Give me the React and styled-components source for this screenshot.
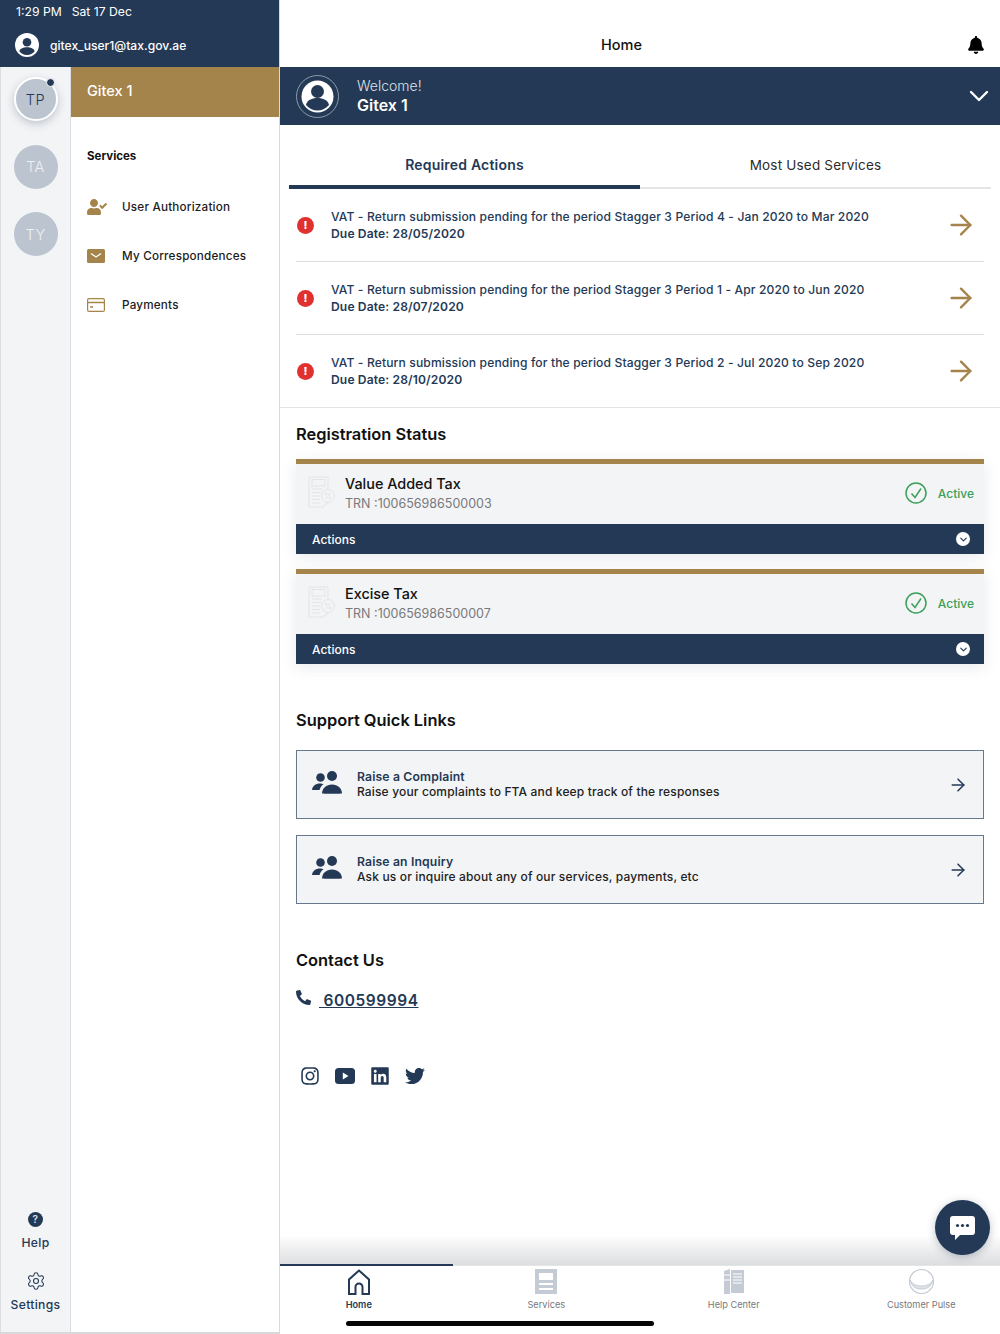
import React from "react";
import styled, { createGlobalStyle } from "styled-components";
import { FaBell, FaInstagram, FaLinkedin, FaTwitter, FaPhoneAlt, FaUserCheck } from "react-icons/fa";
import { Settings, ArrowRight, ChevronDown } from "lucide-react";

const NAVY = "#243955";
const GOLD = "#a5844b";
const PALE = "#f3f4f6";

const Global = createGlobalStyle`
  html, body { margin: 0; padding: 0; background: #fff; }
  body { font-family: Inter, "Liberation Sans", sans-serif; }
  * { box-sizing: border-box; }
`;

const Page = styled.div`
  position: relative;
  width: 1000px;
  height: 1334px;
  display: flex;
  overflow: hidden;
`;

/* ---- 왼쪽 ---- */
const Side = styled.aside`
  width: 280px;
  display: flex;
  flex-direction: column;
  border-right: 1px solid #d8d9db;
  border-bottom: 2px solid #d8d9db;
`;
const SideTop = styled.div`
  height: 67px;
  background: ${NAVY};
  color: #fff;
  padding: 5px 0 0 16px;
`;
const Clock = styled.div`
  font-size: 12.2px;
  line-height: 14px;
  span { margin-left: 10px; }
`;
const UserRow = styled.div`
  display: flex;
  align-items: center;
  gap: 11px;
  margin: 14px 0 0 -1px;
  font-size: 12.1px;
  font-weight: 500;
`;
const SideBody = styled.div`
  flex: 1;
  display: flex;
`;
const Rail = styled.div`
  width: 71px;
  background: ${PALE};
  border-left: 1px solid #dcdde0;
  border-right: 1px solid #dcdde0;
  display: flex;
  flex-direction: column;
  align-items: center;
  padding-top: 10px;
`;
const Avatar = styled.div`
  position: relative;
  width: 44px;
  height: 44px;
  border-radius: 50%;
  background: #bcc4d0;
  color: ${(p) => (p.$active ? NAVY : "#eef0f3")};
  display: flex;
  align-items: center;
  justify-content: center;
  font-size: 14.5px;
  font-weight: 300;
  letter-spacing: 0.5px;
  margin-bottom: 23.5px;
  ${(p) => p.$active && `border: 2px solid #fff; box-shadow: 0 3px 9px rgba(36,57,85,.25);`}
`;
const Dot = styled.i`
  position: absolute;
  top: -1px;
  right: 1px;
  width: 9px;
  height: 9px;
  border-radius: 50%;
  background: ${NAVY};
  border: 1.5px solid #fff;
`;
const RailBottom = styled.div`
  margin-top: auto;
  display: flex;
  flex-direction: column;
  align-items: center;
  padding-bottom: 20px;
`;
const RailItem = styled.div`
  display: flex;
  flex-direction: column;
  align-items: center;
  gap: ${(p) => p.$gap}px;
  color: ${NAVY};
  font-size: 12.2px;
  font-weight: 500;
  letter-spacing: 0.3px;
  margin-top: ${(p) => p.$mt || 0}px;
`;
const HelpDot = styled.div`
  width: 15px;
  height: 15px;
  border-radius: 50%;
  background: ${NAVY};
  color: #dfe3e9;
  font-size: 10px;
  font-weight: 600;
  line-height: 15px;
  text-align: center;
`;
const Panel = styled.div`
  flex: 1;
  background: #fff;
`;
const PanelHead = styled.div`
  height: 50px;
  background: ${GOLD};
  color: #fff;
  font-size: 14.5px;
  font-weight: 500;
  padding: 0 16px 3px;
  display: flex;
  align-items: center;
`;
const PanelTitle = styled.div`
  font-size: 11.5px;
  font-weight: 700;
  color: #111;
  margin: 32px 0 19px 16px;
  line-height: 14px;
`;
const MenuRow = styled.div`
  display: flex;
  align-items: center;
  height: 49px;
  padding-left: 16px;
  font-size: 11.7px;
  font-weight: 500;
  color: #1c1c1c;
  letter-spacing: 0.2px;
`;
const MenuIcon = styled.div`
  width: 35px;
  color: ${GOLD};
  display: flex;
`;

/* ---- 오른쪽 ---- */
const Main = styled.main`
  flex: 1;
  display: flex;
  flex-direction: column;
  min-width: 0;
`;
const TopBar = styled.header`
  position: relative;
  height: 67px;
  display: flex;
  align-items: flex-end;
  justify-content: center;
  padding: 0 37px 14px 0;
  font-size: 14.5px;
  font-weight: 500;
  color: #111;
`;
const BellWrap = styled.div`
  position: absolute;
  right: 15px;
  bottom: 13px;
  display: flex;
`;
const Welcome = styled.div`
  height: 58px;
  background: ${NAVY};
  display: flex;
  align-items: center;
  padding: 0 5px 0 16px;
  color: #fff;
  gap: 18px;
`;
const WelcomeText = styled.div`
  flex: 1;
  small { display: block; font-size: 14px; line-height: 19px; color: #dfe3e9; font-weight: 300; }
  b { display: block; font-size: 16px; line-height: 21px; font-weight: 600; }
`;
const Tabs = styled.div`
  display: flex;
  height: 64px;
  padding: 0 9px;
`;
const Tab = styled.div`
  flex: 1;
  display: flex;
  align-items: center;
  justify-content: center;
  font-size: ${(p) => (p.$active ? 14 : 13.5)}px;
  color: ${(p) => (p.$active ? NAVY : "#2b2b2b")};
  font-weight: ${(p) => (p.$active ? 600 : 400)};
  letter-spacing: 0.2px;
  border-bottom: ${(p) => (p.$active ? `4px solid ${NAVY}` : "2px solid #e4e5e7")};
  padding-top: 18px;
`;
const ActionList = styled.div`
  border-bottom: 1px solid #e2e3e5;
  padding: 0 16px;
`;
const ActionRow = styled.div`
  height: ${(p) => (p.$last ? 72 : 73)}px;
  display: flex;
  align-items: center;
  border-bottom: ${(p) => (p.$last ? "none" : "1px solid #dcdde0")};
`;
const AlertDot = styled.div`
  width: 17px;
  height: 17px;
  border-radius: 50%;
  background: #e03030;
  color: #fff;
  font-size: 11px;
  font-weight: 800;
  line-height: 17px;
  text-align: center;
  margin: 0 17px 0 1px;
`;
const ActionText = styled.div`
  flex: 1;
  color: ${NAVY};
  font-size: 12.1px;
  letter-spacing: 0.125px;
  line-height: 17px;
  font-weight: 500;
  b { display: block; font-weight: 600; }
`;
const ArrowBox = styled.div`
  display: flex;
  color: ${GOLD};
  margin-right: 7px;
`;
const Section = styled.section`
  padding: 0 16px;
`;
const Heading = styled.h2`
  margin: ${(p) => p.$mt}px 0 ${(p) => p.$mb}px;
  font-size: 16.4px;
  line-height: 20px;
  font-weight: 600;
  color: #111;
`;
const RegCard = styled.div`
  border-top: 5px solid ${GOLD};
  margin-bottom: 15px;
  box-shadow: 0 4px 14px rgba(36,57,85,.1);
`;
const RegBody = styled.div`
  height: 60px;
  background: ${PALE};
  display: flex;
  align-items: center;
  padding: 0 10px 0 12px;
  position: relative;
  svg.vat { margin-top: -3px; }
`;
const RegInfo = styled.div`
  flex: 1;
  margin-left: 10px;
  margin-top: -1px;
  h3 { margin: 0; font-size: 14.4px; line-height: 20px; font-weight: 500; color: #111; }
  p { margin: 0; font-size: 12.5px; line-height: 19px; color: #77797c; }
`;
const ActiveTag = styled.div`
  display: flex;
  align-items: center;
  gap: 11px;
  color: #3ba05a;
  font-size: 12px;
  font-weight: 500;
  margin-top: -2px;
`;
const RegActions = styled.div`
  height: 30px;
  background: ${NAVY};
  color: #fff;
  font-size: 12px;
  font-weight: 500;
  display: flex;
  align-items: center;
  justify-content: space-between;
  padding: 0 14px 0 16px;
`;
const RoundChevron = styled.div`
  width: 14px;
  height: 14px;
  border-radius: 50%;
  background: #fff;
  color: ${NAVY};
  display: flex;
  align-items: center;
  justify-content: center;
`;
const LinkCard = styled.div`
  height: 69px;
  margin-bottom: 16px;
  background: ${PALE};
  border: 1.5px solid #67778c;
  display: flex;
  align-items: center;
  padding: 0 15px;
  svg.people { margin-top: -4px; }
`;
const LinkText = styled.div`
  flex: 1;
  margin-left: 15px;
  margin-top: -1px;
  font-size: 12px;
  letter-spacing: 0.15px;
  line-height: 15px;
  font-weight: 500;
  color: #222;
  b { display: block; color: ${NAVY}; font-weight: 600; font-size: 12.2px; }
`;
const Phone = styled.div`
  display: flex;
  align-items: center;
  color: ${NAVY};
  gap: 8px;
  margin-top: 19px;
  height: 22px;
  a { color: ${NAVY}; font-size: 15.5px; font-weight: 600; text-decoration: underline; white-space: pre; letter-spacing: 0.55px; }
  svg { margin-top: -6px; }
`;
const Socials = styled.div`
  display: flex;
  align-items: center;
  gap: 15px;
  color: ${NAVY};
  margin: 55px 0 0 4px;
`;
const Spacer = styled.div`
  flex: 1;
  position: relative;
  &::after {
    content: "";
    position: absolute;
    left: 0; right: 0; bottom: 0;
    height: 30px;
    background: linear-gradient(to bottom, rgba(220,221,223,0), rgba(220,221,223,1));
  }
`;
const BottomNav = styled.nav`
  height: 69px;
  border-top: 1px solid #e4e5e7;
  background: #fff;
`;
/* 탭 간격이 화면보다 넓음 - 좌우로 15px씩 삐져나감 */
const NavRow = styled.div`
  display: flex;
  margin: 0 -15px;
`;
const NavItem = styled.div`
  flex: 1;
  position: relative;
  display: flex;
  flex-direction: column;
  align-items: center;
  padding-top: 3px;
  font-size: 9.2px;
  color: ${(p) => (p.$active ? NAVY : "#77797c")};
  font-weight: ${(p) => (p.$active ? 600 : 400)};
  ${(p) => p.$active && `&::before { content: ""; position: absolute; top: -2px; left: 15px; right: 0; height: 2px; background: ${NAVY}; }`}
`;
const NavIcon = styled.div`
  height: 27px;
  margin-bottom: 3px;
  display: flex;
`;
const Fab = styled.div`
  position: absolute;
  right: 10px;
  top: 1200px;
  width: 55px;
  height: 55px;
  border-radius: 50%;
  background: ${NAVY};
  display: flex;
  align-items: center;
  justify-content: center;
  box-shadow: 0 2px 8px rgba(36,57,85,.3);
`;
const HomeBar = styled.div`
  position: absolute;
  left: 346px;
  top: 1321px;
  width: 308px;
  height: 5px;
  border-radius: 3px;
  background: #050505;
`;

const ProfileGlyph = ({ size, fg, bg }) => (
  <svg width={size} height={size} viewBox="0 0 24 24">
    <circle cx="12" cy="12" r="12" fill={bg} />
    <circle cx="12" cy="9.2" r="4.3" fill={fg} />
    <path d="M4.3 18.2c1-3 4-4 7.7-4s6.700 1 7.700 4c-1.800 2.300-4.500 3.800-7.700 3.800s-5.900-1.500-7.700-3.800z" fill={fg} />
  </svg>
);

const VatIcon = () => (
  <svg className="vat" width="27" height="33" viewBox="0 0 27 33" fill="none" stroke="#e3e4e7" strokeWidth="1">
    <path d="M1 1h19v12M1 1v30h14l5-4" />
    <rect x="4" y="3.500" width="13" height="6.500" />
    <path d="M4 13h10M4 16.500h9M4 20h8M4 23.500h8M4 27h8" />
    <circle cx="20" cy="20" r="6.500" />
    <path d="M17.500 23l5-6" />
    <circle cx="18" cy="18" r="1" />
    <circle cx="22" cy="22" r="1" />
  </svg>
);

const PeopleIcon = () => (
  <svg className="people" width="30" height="23" viewBox="0 0 30 23" fill={NAVY}>
    <circle cx="8.500" cy="6.500" r="4.300" />
    <circle cx="20" cy="5" r="5" />
    <path d="M0 19c.5-4 3.500-6.500 8-6.500 1.500 0 2.500.3 3.500.8-2 1.300-3.300 3.200-4 5.700z" />
    <path d="M10 22.500c.3-5.500 4.300-9 10-9s9.700 3.500 10 9c-2 .3-18 .3-20 0z" />
  </svg>
);

const ActiveCheck = () => (
  <svg width="22" height="22" viewBox="0 0 22 22" fill="none" stroke="#3ba05a" strokeWidth="1.500">
    <circle cx="11" cy="11" r="10" />
    <path d="M6.500 11.500l3.500 4 6-9" />
  </svg>
);

const YoutubeGlyph = () => (
  <svg width="20" height="16" viewBox="0 0 20 16">
    <rect width="20" height="16" rx="3.500" fill={NAVY} />
    <path d="M7.800 4.500l5.700 3.500-5.700 3.500z" fill="#fff" />
  </svg>
);

const actions = [
  { text: "VAT - Return submission pending for the period Stagger 3 Period 4 - Jan 2020 to Mar 2020", due: "Due Date: 28/05/2020" },
  { text: "VAT - Return submission pending for the period Stagger 3 Period 1 - Apr 2020 to Jun 2020", due: "Due Date: 28/07/2020" },
  { text: "VAT - Return submission pending for the period Stagger 3 Period 2 - Jul 2020 to Sep 2020", due: "Due Date: 28/10/2020" },
];

const regs = [
  { name: "Value Added Tax", trn: "TRN :100656986500003" },
  { name: "Excise Tax", trn: "TRN :100656986500007" },
];

const links = [
  { title: "Raise a Complaint", desc: "Raise your complaints to FTA and keep track of the responses" },
  { title: "Raise an Inquiry", desc: "Ask us or inquire about any of our services, payments, etc" },
];

export default function App() {
  return (
    <Page>
      <Global />
      <Side>
        <SideTop>
          <Clock>1:29 PM<span>Sat 17 Dec</span></Clock>
          <UserRow>
            <ProfileGlyph size={24} fg={NAVY} bg="#fff" />
            gitex_user1@tax.gov.ae
          </UserRow>
        </SideTop>
        <SideBody>
          <Rail>
            <Avatar $active>TP<Dot /></Avatar>
            <Avatar>TA</Avatar>
            <Avatar>TY</Avatar>
            <RailBottom>
              <RailItem $gap={8}>
                <HelpDot>?</HelpDot>
                Help
              </RailItem>
              <RailItem $gap={6} $mt={21}>
                <Settings size={20} strokeWidth={1.3} />
                Settings
              </RailItem>
            </RailBottom>
          </Rail>
          <Panel>
            <PanelHead>Gitex 1</PanelHead>
            <PanelTitle>Services</PanelTitle>
            <MenuRow>
              <MenuIcon><FaUserCheck size={20} /></MenuIcon>
              User Authorization
            </MenuRow>
            <MenuRow>
              <MenuIcon>
                <svg width="18" height="14" viewBox="0 0 18 14">
                  <rect width="18" height="14" rx="1.500" fill={GOLD} />
                  <path d="M4 4.500l5 3.500 5-3.500" fill="none" stroke="#fff" strokeWidth="1.200" />
                </svg>
              </MenuIcon>
              My Correspondences
            </MenuRow>
            <MenuRow>
              <MenuIcon>
                <svg width="18" height="14" viewBox="0 0 18 14" fill="none" stroke={GOLD} strokeWidth="1.200">
                  <rect x=".6" y=".6" width="16.800" height="12.800" rx="1.500" />
                  <path d="M.6 4.500h16.800" strokeWidth="1.500" />
                  <path d="M3 9h3" strokeWidth="1.500" />
                </svg>
              </MenuIcon>
              Payments
            </MenuRow>
          </Panel>
        </SideBody>
      </Side>

      <Main>
        <TopBar>
          Home
          <BellWrap><FaBell size={18} color="#000" /></BellWrap>
        </TopBar>
        <Welcome>
          <svg width="43" height="43" viewBox="0 0 43 43">
            <circle cx="21.500" cy="21.500" r="21" fill="none" stroke="#a9b2bf" strokeWidth=".8" />
            <circle cx="21.500" cy="21.500" r="16" fill="#fff" />
            <circle cx="21.500" cy="16.500" r="6.500" fill={NAVY} />
            <path d="M10 30c1-5 6-7 11.500-7s10.500 2 11.500 7c-2.800 3.500-7 5.500-11.500 5.500S12.800 33.500 10 30z" fill={NAVY} />
          </svg>
          <WelcomeText>
            <small>Welcome!</small>
            <b>Gitex 1</b>
          </WelcomeText>
          <ChevronDown size={32} strokeWidth={1.8} />
        </Welcome>
        <Tabs>
          <Tab $active>Required Actions</Tab>
          <Tab>Most Used Services</Tab>
        </Tabs>
        <ActionList>
          {actions.map((a, i) => (
            <ActionRow key={a.due} $last={i === actions.length - 1}>
              <AlertDot>!</AlertDot>
              <ActionText>
                {a.text}
                <b>{a.due}</b>
              </ActionText>
              <ArrowBox><ArrowRight size={32} strokeWidth={1.8} /></ArrowBox>
            </ActionRow>
          ))}
        </ActionList>
        <Section>
          <Heading $mt={16} $mb={15}>Registration Status</Heading>
          {regs.map((r) => (
            <RegCard key={r.name}>
              <RegBody>
                <VatIcon />
                <RegInfo>
                  <h3>{r.name}</h3>
                  <p>{r.trn}</p>
                </RegInfo>
                <ActiveTag><ActiveCheck />Active</ActiveTag>
              </RegBody>
              <RegActions>
                Actions
                <RoundChevron><ChevronDown size={11} strokeWidth={2.5} /></RoundChevron>
              </RegActions>
            </RegCard>
          ))}
          <Heading $mt={46} $mb={20}>Support Quick Links</Heading>
          {links.map((l) => (
            <LinkCard key={l.title}>
              <PeopleIcon />
              <LinkText>
                <b>{l.title}</b>
                {l.desc}
              </LinkText>
              <ArrowRight size={20} color={NAVY} strokeWidth={1.8} />
            </LinkCard>
          ))}
          <Heading $mt={46} $mb={0}>Contact Us</Heading>
          <Phone>
            <FaPhoneAlt size={15} />
            <a> 600599994</a>
          </Phone>
          <Socials>
            <FaInstagram size={20} />
            <YoutubeGlyph />
            <FaLinkedin size={20} />
            <FaTwitter size={20} />
          </Socials>
        </Section>
        <Spacer />
        <BottomNav>
          <NavRow>
            <NavItem $active>
              <NavIcon>
                <svg width="24" height="27" viewBox="0 0 24 27" fill="none" stroke={NAVY} strokeWidth="2">
                  <path d="M2 25V10.500L12 1.500l10 9V25h-6.500v-7a3.500 3.500 0 0 0-7 0v7z" />
                </svg>
              </NavIcon>
              Home
            </NavItem>
            <NavItem>
              <NavIcon>
                <svg width="22" height="25" viewBox="0 0 22 25">
                  <rect width="22" height="25" fill="#c4cbd5" />
                  <rect x="4" y="4" width="14" height="7" fill="#fff" />
                  <rect x="4" y="14" width="14" height="2" fill="#fff" />
                  <rect x="4" y="19" width="14" height="2" fill="#fff" />
                </svg>
              </NavIcon>
              Services
            </NavItem>
            <NavItem>
              <NavIcon>
                <svg width="20" height="25" viewBox="0 0 20 25">
                  <path d="M0 2l6-2v25H0z" fill="#c4cbd5" />
                  <path d="M7 1h13v23H7z" fill="#c4cbd5" />
                  <path d="M0 6h6M0 11h6M9 5h9M9 8h9M9 11h9M9 14h9" stroke="#fff" strokeWidth="1" />
                </svg>
              </NavIcon>
              Help Center
            </NavItem>
            <NavItem>
              <NavIcon>
                <svg width="27" height="25" viewBox="0 0 27 25" fill="none" stroke="#c4cbd5">
                  <circle cx="13.500" cy="12.500" r="12" strokeWidth="1.200" />
                  <path d="M2 11c2 7 6 9 11.500 9s9.500-2 11.500-9c-2 4-6 6-11.500 6S4 15 2 11z" fill="#dfe2e7" />
                </svg>
              </NavIcon>
              Customer Pulse
            </NavItem>
          </NavRow>
        </BottomNav>
      </Main>

      <Fab>
        <svg width="25" height="24" viewBox="0 0 25 24">
          <path d="M3 0h19a3 3 0 0 1 3 3v13a3 3 0 0 1-3 3H10l-5 5v-5H3a3 3 0 0 1-3-3V3a3 3 0 0 1 3-3z" fill="#fff" />
          <circle cx="7.500" cy="9.500" r="1.600" fill={NAVY} />
          <circle cx="12.500" cy="9.500" r="1.600" fill={NAVY} />
          <circle cx="17.500" cy="9.500" r="1.600" fill={NAVY} />
        </svg>
      </Fab>
      <HomeBar />
    </Page>
  );
}
